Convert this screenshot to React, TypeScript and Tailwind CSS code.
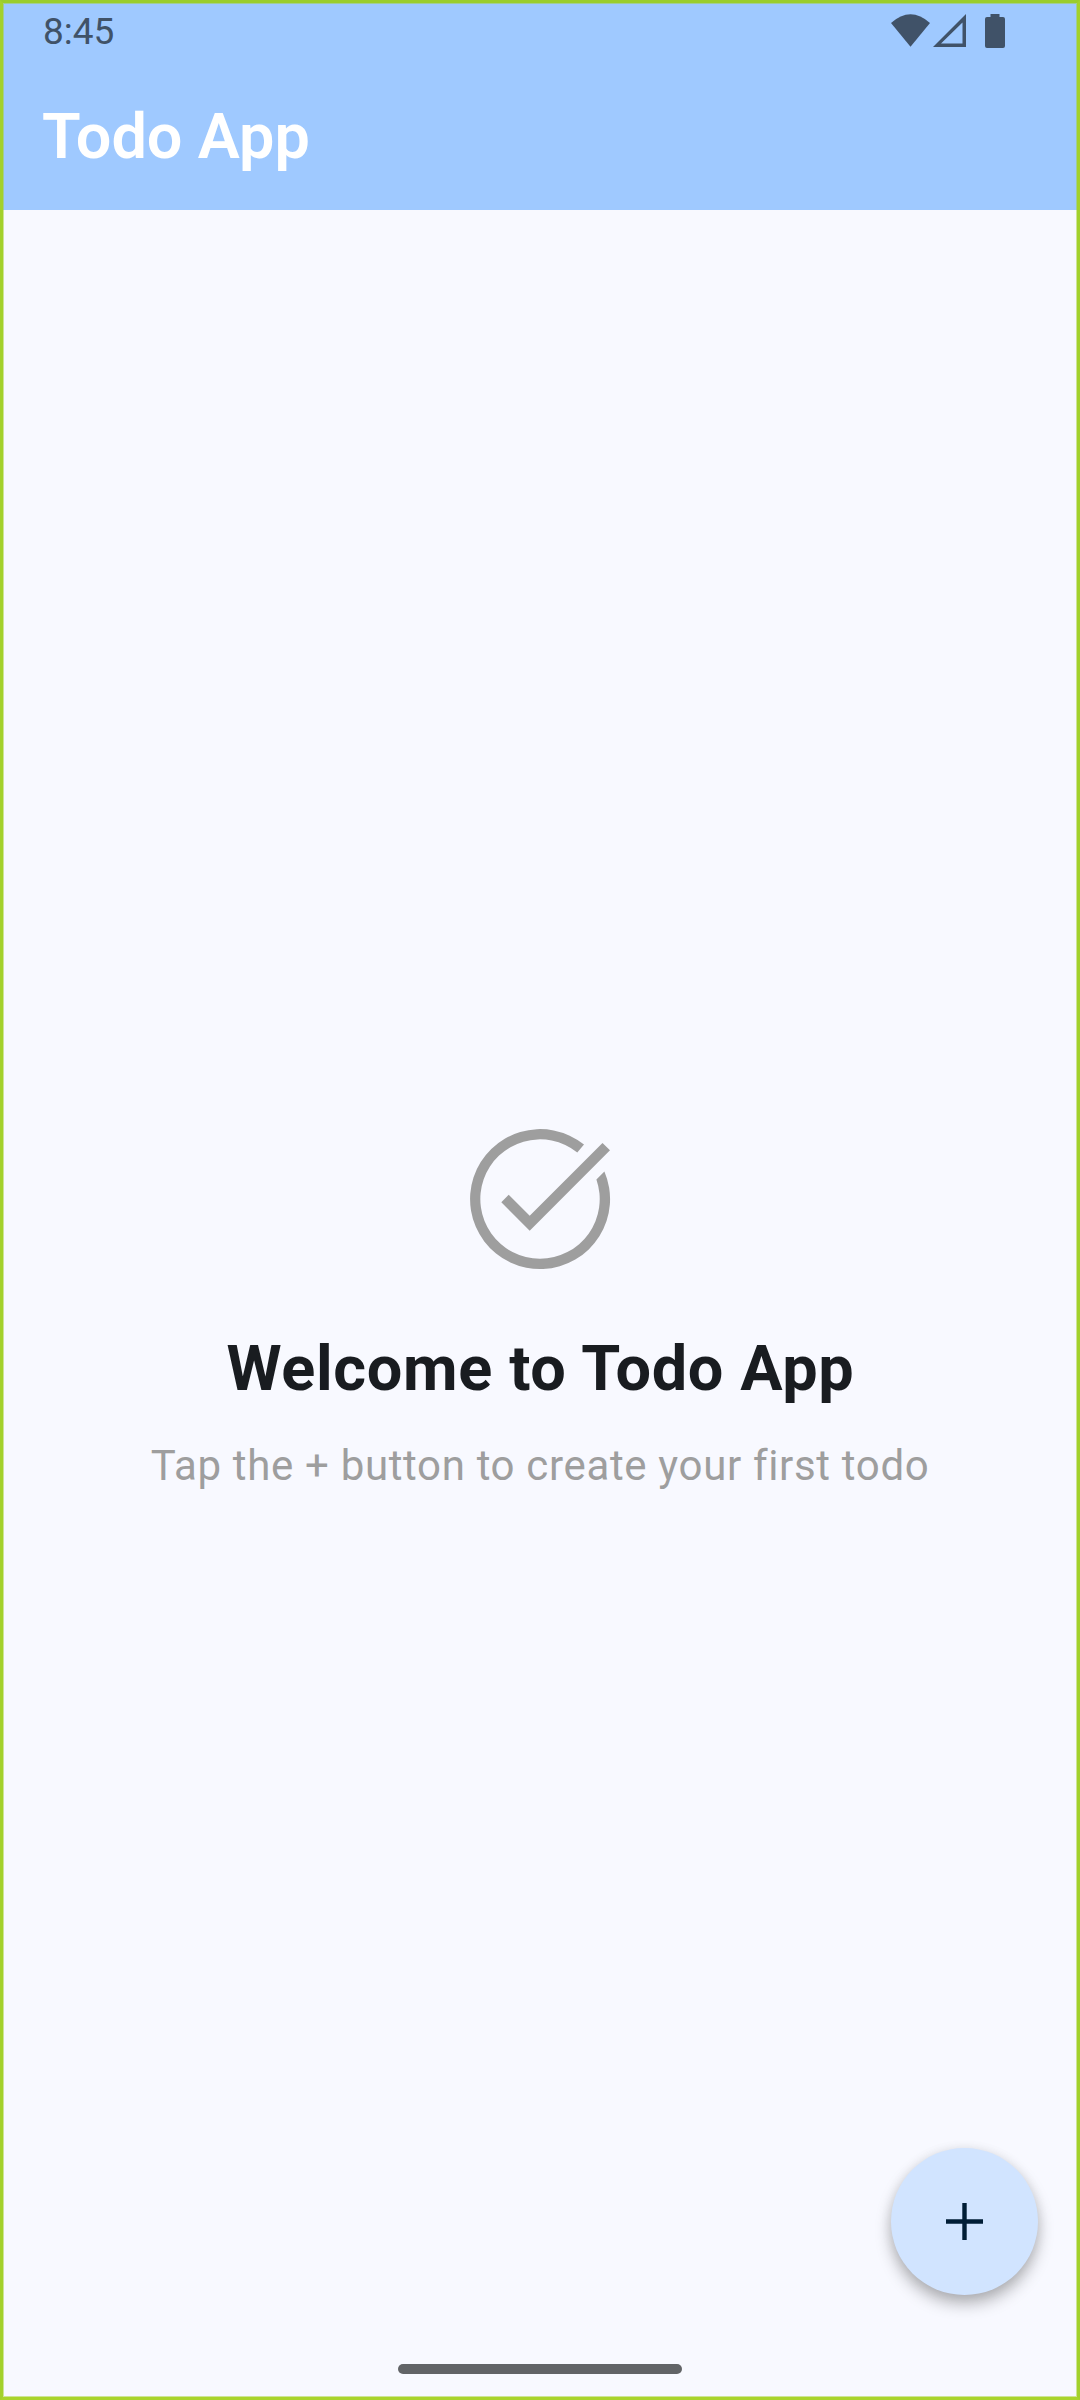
export default function App() {
  return (
    <div className="relative flex h-[2400px] w-[1080px] flex-col overflow-hidden bg-[#f8f9ff] font-['Roboto',sans-serif]">
      <header className="h-[210px] bg-[#9fc9ff]">
        <div className="flex h-[63px] items-center justify-between pl-[43px] pr-[72px] text-[#405268]">
          <span className="text-[37px] leading-[63px]">8:45</span>
          <svg width="118" height="40" viewBox="890 12 118 40" fill="currentColor">
            <path d="M891 23Q910.500 5.500 930 23L910.500 46.700Z" />
            <path fillRule="evenodd" d="M933 47L966 14V47ZM941 43.500H962.500V22.500Z" />
            <path d="M990.500 14H999.500V17H1003Q1005 17 1005 19V46Q1005 48 1003 48H987Q985 48 985 46V19Q985 17 987 17H990.500Z" />
          </svg>
        </div>
        <h1 className="pl-[42px] pt-[37px] text-[63px] font-semibold leading-[74px] tracking-[-0.1px] text-white">Todo App</h1>
      </header>
      <main className="flex flex-1 flex-col items-center pt-[905px]">
        <svg width="168" height="168" viewBox="0 0 168 168" fill="#9e9e9e">
          <path d="M154 35.300L73.700 115.700L45.300 87.200L52.700 79.700L73.700 100.800L146.500 27.900Z" />
          <path d="M128 29.600A70 70 0 1 0 148.400 56.500L140.400 64.400A59.700 59.700 0 1 1 121.300 37.400Z" />
        </svg>
        <h2 className="mt-[48px] pl-px text-[63px] font-bold leading-[76px] tracking-[0.640px] text-[#191c20]">Welcome to Todo App</h2>
        <p className="mt-[27px] text-[42px] leading-[63px] tracking-[0.660px] text-[#9e9e9e]">Tap the + button to create your first todo</p>
      </main>
      <button aria-label="Create todo" className="absolute bottom-[105px] right-[42px] flex size-[147px] items-center justify-center rounded-full bg-[#d1e4ff] shadow-[0_9px_16px_rgba(0,0,0,0.28),0_1px_12px_rgba(0,0,0,0.08)]">
        <svg width="37" height="37" viewBox="0 0 37 37" fill="#001d36"><path d="M16.300 0h4.400v16.300H37v4.400H20.700V37h-4.400V20.700H0v-4.400h16.300z" /></svg>
      </button>
      <div className="absolute bottom-[26px] left-1/2 h-[10px] w-[284px] -translate-x-1/2 rounded-full bg-[#626467]" />
      <div className="pointer-events-none absolute inset-0 border-[3px] border-t-[#9acd2c] border-r-[#a3d12c] border-b-[#aad42c] border-l-[#a3d12c]">
        <div className="size-full border border-[#a3d12c]/50" />
      </div>
    </div>
  );
}
